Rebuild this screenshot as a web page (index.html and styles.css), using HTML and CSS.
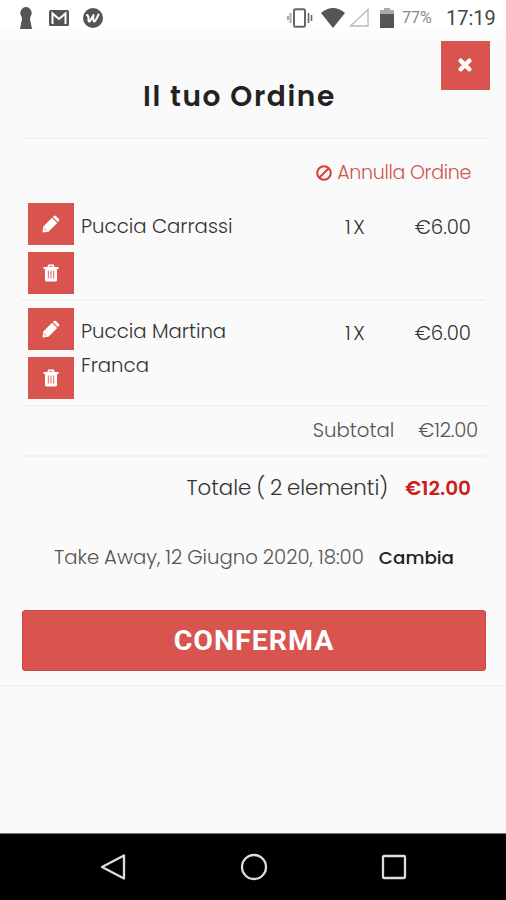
FILE: index.html
```html
<!DOCTYPE html>
<html lang="it">
<head>
<meta charset="utf-8">
<meta name="viewport" content="width=device-width, initial-scale=1">
<title>Il tuo Ordine</title>
<link rel="stylesheet" href="styles.css">
</head>
<body>
<svg class="symbols" aria-hidden="true">
  <symbol id="pencil" viewBox="0 0 18 18"><path fill="currentColor" d="M.5 17.500l.8-6L10 2.800l5.200 5.200L6.500 16.700z M10.800 2l1.200-1q1-.8 1.900 0l3 3q.8.900 0 1.900l-1 1.200z"/><path d="M2.200 13.500l2.300 2.300" fill="none" stroke="#d9534f" stroke-width=".9"/></symbol>
  <symbol id="trash" viewBox="0 0 16 18"><path fill="none" stroke="currentColor" stroke-width="1.800" d="M.5 4h15M5 4l.8-2.600h4.400L11 4"/><path fill="currentColor" d="M2 4h12v12q0 1.500-1.500 1.500h-9Q2 17.500 2 16z"/><path stroke="#d9534f" stroke-width=".9" d="M5.300 6.500v8M8 6.500v8M10.700 6.500v8"/></symbol>
</svg>
<header class="status">
  <div class="status-left">
    <svg width="14" height="22" viewBox="0 0 14 22"><path fill="#555" d="M7 0a6 6 0 0 1 4.500 9.500L11 12l2 10H1l2-10-.5-2.500A6 6 0 0 1 7 0z"/></svg>
    <svg width="20" height="16" viewBox="0 0 20 16"><rect width="20" height="16" rx="1.500" fill="#555"/><path d="M3.500 14V3.500L10 9l6.500-5.500V14" fill="none" stroke="#fff" stroke-width="2"/></svg>
    <svg width="20" height="20" viewBox="0 0 20 20"><circle cx="10" cy="10" r="10" fill="#555"/><path d="M4 7q2 1 1.500 5 0 2 1.300 1.300L10.500 7q-.8 5 .5 6.500 1.500 0 4.500-7" fill="none" stroke="#fff" stroke-width="2" stroke-linecap="round" stroke-linejoin="round"/></svg>
  </div>
  <div class="status-right">
    <svg width="26" height="20" viewBox="0 0 26 20"><rect x="7" y="1.200" width="11" height="17.600" rx="1.500" fill="none" stroke="#666" stroke-width="2"/><path d="M1 8v4M3.500 5v10" stroke="#aaa" stroke-width="2"/><path d="M21.500 5v10M24.500 7v6" stroke="#666" stroke-width="1.600"/></svg>
    <svg class="wifi" width="24" height="20" viewBox="0 0 24 20"><path fill="#555" d="M0 5Q12-5 24 5L12 20z"/></svg>
    <svg class="signal" width="20" height="19" viewBox="0 0 20 19"><path fill="none" stroke="#bbb" stroke-width="1.300" d="M1.500 18L19 1.500V18z"/></svg>
    <svg class="battery" width="14" height="20" viewBox="0 0 14 20"><path fill="#aaa" d="M4 0h6v2h4v5H0V2h4z"/><path fill="#555" d="M0 6h14v14H0z"/></svg>
    <span class="percent">77%</span>
    <span class="clock">17:19</span>
  </div>
</header>
<main class="sheet">
  <button class="close" aria-label="Chiudi"><svg width="14" height="14" viewBox="0 0 14 14"><path d="M2.700 2.700l8.600 8.600M11.300 2.700l-8.600 8.600" stroke="#fff" stroke-width="4.400" stroke-linecap="round"/></svg></button>
  <h1>Il tuo Ordine</h1>
  <div class="cancel">
    <svg width="16" height="16" viewBox="0 0 16 16"><circle cx="8" cy="8" r="6.800" fill="none" stroke="#d83c34" stroke-width="2"/><path d="M3.500 12.500l9-9" stroke="#d83c34" stroke-width="2"/></svg>
    <span>Annulla Ordine</span>
  </div>
  <section class="item">
    <div class="actions"><button aria-label="Modifica"><svg width="18" height="18"><use href="#pencil"/></svg></button><button aria-label="Elimina"><svg width="16" height="18"><use href="#trash"/></svg></button></div>
    <div class="name">Puccia Carrassi</div>
    <div class="qty">1X</div><div class="price">€6.00</div>
  </section>
  <section class="item second">
    <div class="actions"><button aria-label="Modifica"><svg width="18" height="18"><use href="#pencil"/></svg></button><button aria-label="Elimina"><svg width="16" height="18"><use href="#trash"/></svg></button></div>
    <div class="name">Puccia Martina<br>Franca</div>
    <div class="qty">1X</div><div class="price">€6.00</div>
  </section>
  <div class="subtotal"><span class="sub-label">Subtotal</span><span class="sub-value">€12.00</span></div>
  <div class="total"><span>Totale ( 2 elementi)</span><strong>€12.00</strong></div>
  <div class="pickup"><span>Take Away, 12 Giugno 2020, 18:00</span><b>Cambia</b></div>
  <button class="confirm">CONFERMA</button>
</main>
<nav class="android">
  <svg width="26" height="28" viewBox="0 0 26 28"><path d="M24 2.500v23L2 14z" fill="none" stroke="#ddd" stroke-width="2.300" stroke-linejoin="round"/></svg>
  <svg width="28" height="28" viewBox="0 0 28 28"><circle cx="14" cy="14" r="12" fill="none" stroke="#ddd" stroke-width="2.300"/></svg>
  <svg width="26" height="26" viewBox="0 0 26 26"><rect x="2" y="2" width="22" height="22" rx="1" fill="none" stroke="#ddd" stroke-width="2.300"/></svg>
</nav>
</body>
</html>
```

FILE: styles.css
```css
* { box-sizing: border-box; }
body {
  margin: 0;
  width: 506px;
  height: 900px;
  display: flex;
  flex-direction: column;
  overflow: hidden;
  background: #fafafa;
  color: #333;
  font: 300 19.700px/34px Poppins, Inter, sans-serif;
  white-space: nowrap;
}
svg { display: block; flex: none; }
.symbols { position: absolute; width: 0; height: 0; }
button { border: 0; padding: 0; color: #fff; background: #d9534f; display: flex; align-items: center; justify-content: center; }
.status { height: 36px; flex: none; display: flex; justify-content: space-between; padding: 0 10px 0 19px; background: linear-gradient(#fff 75%, #fafafa); font-family: Roboto, sans-serif; }
.status-left, .status-right { display: flex; align-items: center; height: 35px; }
.status-left { gap: 16px; }
.status-left svg:last-child { margin-left: -2px; }
.wifi { margin-left: 8px; }
.signal { margin-left: 4px; }
.battery { margin-left: 11px; }
.percent { margin-left: 8px; width: 31px; font-size: 16px; font-weight: 400; color: #888; }
.clock { margin-left: 13px; width: 50px; font-size: 20px; font-weight: 400; color: #444; }
.sheet { position: relative; height: 651px; flex: none; padding: 0 20px 0 22px; border-bottom: 2px solid #f1f1f1; }
.close { position: absolute; right: 16px; top: 5px; width: 49px; height: 49px; padding: 0 1px 2px 0; }
h1 { margin: 0; height: 103px; border-bottom: 2px solid #f1f1f1; padding: 44px 0 0 121px; font-size: 28px; line-height: 34px; font-weight: 600; color: #222; letter-spacing: 1.600px; }
.cancel { height: 64px; padding: 17px 15px 0 0; display: flex; justify-content: flex-end; gap: 5px; color: #cf5550; font-size: 19px; letter-spacing: -.3px; }
.cancel svg { margin-top: 9px; }
.item { height: 98px; border-bottom: 2px solid #f1f1f1; display: grid; grid-template-columns: 59px 230px 74px 86px; }
.item.second { height: 106px; padding-top: 7px; }
.actions { display: grid; grid-template-rows: 42px 42px; row-gap: 7px; padding-left: 6px; width: 52px; }
.name { padding-top: 6px; }
.qty { padding: 7px 0 0 34px; letter-spacing: 2.500px; }
.second .qty, .second .price { padding-top: 8px; }
.price { padding-top: 7px; text-align: right; }
.subtotal { height: 50px; border-bottom: 2px solid #f1f1f1; display: flex; justify-content: flex-end; padding: 6px 8px 0 0; gap: 24px; color: #555; }
.sub-value { letter-spacing: -.2px; }
.total { height: 63px; display: flex; justify-content: flex-end; padding: 14px 15px 0 0; gap: 17px; font-size: 21.300px; word-spacing: -1px; }
.total strong { font-size: 20px; font-weight: 600; color: #c9211e; }
.pickup { height: 90px; display: flex; justify-content: flex-end; padding: 20px 32px 0 0; gap: 15px; color: #555; }
.pickup span { word-spacing: -.5px; }
.pickup b { font-size: 18.300px; line-height: 36px; font-weight: 500; color: #222; }
.confirm { width: 464px; height: 61px; border-radius: 4px; padding-bottom: 1px; font: 700 28.500px Roboto, sans-serif; letter-spacing: 1px; box-shadow: inset 0 0 0 1px #ce4641; }
.android { margin-top: auto; height: 67px; border-top: 1px solid #777; background: #000; display: flex; align-items: center; justify-content: space-between; padding: 0 99px 0 100px; }
```
